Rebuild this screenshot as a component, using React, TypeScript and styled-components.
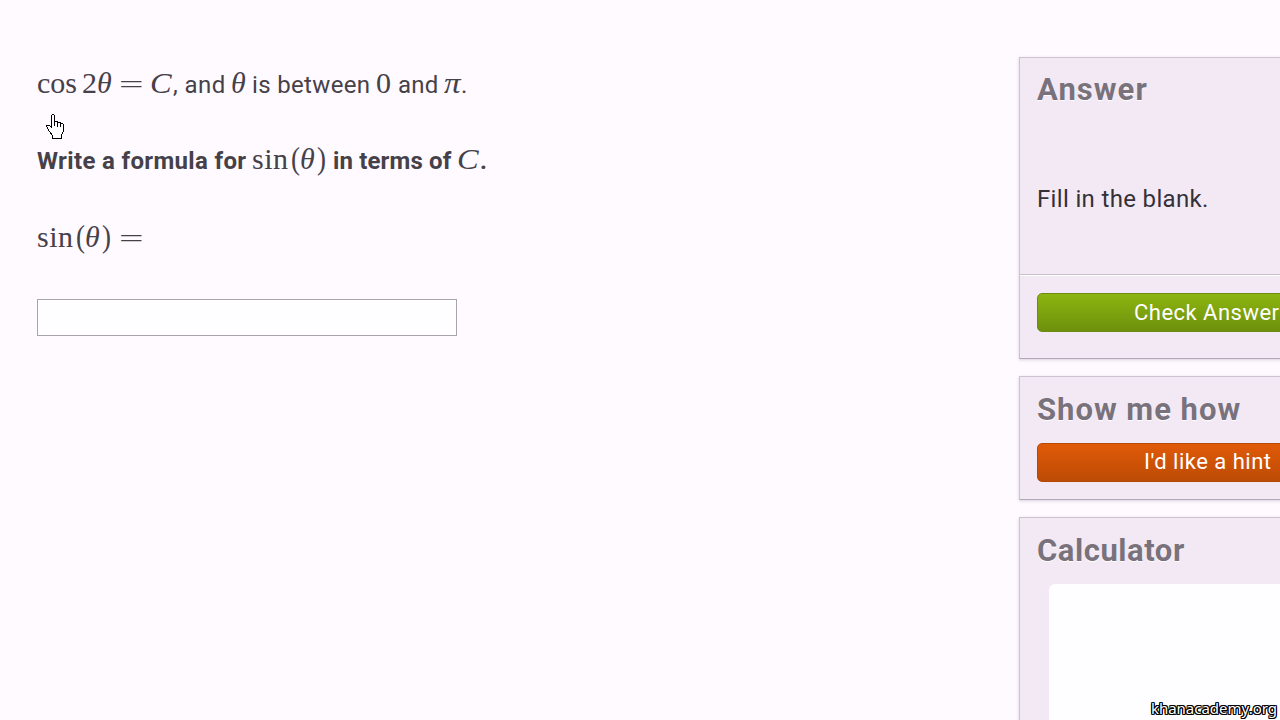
import React from "react";
import styled, { createGlobalStyle } from "styled-components";

const GlobalStyle = createGlobalStyle`
  * { box-sizing: border-box; }
  body { margin: 0; overflow: hidden; background: #fefaff; }
`;

const Page = styled.div`
  position: relative;
  display: flex;
  justify-content: space-between;
  width: 1280px;
  height: 720px;
  overflow: hidden;
  background: #fefaff;
  font-family: Roboto, "Liberation Sans", sans-serif;
  color: #464149;
`;

const Problem = styled.main`
  width: 640px;
  padding: 63px 0 0 37px;
`;

const Line = styled.div<{ $gap: number }>`
  display: flex;
  align-items: baseline;
  height: 40px;
  line-height: 40px;
  white-space: pre;
  margin-bottom: ${(p) => p.$gap}px;
`;

const Prose = styled.span<{ $w: number; $ls?: number; $bold?: boolean }>`
  flex: none;
  width: ${(p) => p.$w}px;
  font-size: 24px;
  font-weight: ${(p) => (p.$bold ? 700 : 400)};
  letter-spacing: ${(p) => p.$ls ?? 0}px;
`;

const MathText = styled.span<{ $w: number; $sx?: number; $sy?: number; $italic?: boolean }>`
  flex: none;
  width: ${(p) => p.$w}px;
  font-family: "Liberation Serif", serif;
  font-size: 30px;
  font-style: ${(p) => (p.$italic ? "italic" : "normal")};
  transform: scale(${(p) => p.$sx ?? 1}, ${(p) => p.$sy ?? 1});
  transform-origin: 0 73%;
`;

const FunctionName = styled(MathText)`
  letter-spacing: 0.5px;
`;

const AnswerInput = styled.input`
  display: block;
  width: 420px;
  height: 37px;
  padding: 0 8px;
  border: 1px solid #aaa3ad;
  border-radius: 0;
  background: #fefdff;
  font: 24px Roboto, sans-serif;
  outline: none;
`;

const Sidebar = styled.aside`
  flex: none;
  display: flex;
  flex-direction: column;
  gap: 17px;
  width: 261px;
  padding-top: 57px;
`;

const Card = styled.section<{ $h: number }>`
  flex: none;
  width: 420px;
  height: ${(p) => p.$h}px;
  border: 1px solid #cdc2d1;
  border-bottom-color: #b3a8b8;
  background: #f3e9f5;
  box-shadow: 0 1px 3px rgba(90, 70, 100, 0.22);
`;

const Heading = styled.h2<{ $ls: number; $top?: number }>`
  margin: 0;
  height: 51px;
  padding: ${(p) => p.$top ?? 14}px 0 0 17px;
  font-size: 31px;
  line-height: 38px;
  font-weight: 700;
  letter-spacing: ${(p) => p.$ls}px;
  color: #79727c;
  text-shadow: 0 1px 0 #fff;
`;

const Instruction = styled.p`
  margin: 0;
  height: 165px;
  padding: 75px 0 0 17px;
  font-size: 24px;
  line-height: 30px;
  letter-spacing: 0.34px;
  color: #353038;
`;

const Actions = styled.div`
  padding: 18px 0 0 17px;
  border-top: 1px solid #c9bfcd;
  box-shadow: inset 0 1px 0 #fff;
`;

const HintActions = styled.div`
  padding: 15px 0 0 17px;
`;

const Button = styled.button<{ $tone: "green" | "orange"; $pad: number; $ls: number }>`
  display: block;
  width: 384px;
  height: 39px;
  padding: 0 0 ${(p) => (p.$tone === "green" ? 0 : 1)}px ${(p) => p.$pad}px;
  border: 1px solid ${(p) => (p.$tone === "green" ? "#6d8c12" : "#b44a08")};
  border-radius: 5px;
  background: ${(p) =>
    p.$tone === "green"
      ? "linear-gradient(#8db510, #6e900d)"
      : "linear-gradient(#e05a08, #bd4b05)"};
  color: #fff;
  font: 22px/${(p) => (p.$tone === "green" ? 37 : 36)}px Roboto, sans-serif;
  letter-spacing: ${(p) => p.$ls}px;
  text-align: left;
  white-space: nowrap;
`;

const CalculatorScreen = styled.div`
  width: 360px;
  height: 200px;
  margin: 15px 0 0 29px;
  border-radius: 6px;
  background: #fefdff;
`;

const Pointer = styled.svg`
  position: absolute;
  left: 46px;
  top: 114px;
`;

const Watermark = styled.div`
  position: absolute;
  right: 3px;
  bottom: 3px;
  font: 15px/18px "Noto Sans", "Open Sans", sans-serif;
  color: #fff;
  text-shadow: -1px -1px 0 #000, 0 -1px 0 #000, 1px -1px 0 #000, -1px 0 0 #000,
    1px 0 0 #000, -1px 1px 0 #000, 0 1px 0 #000, 1px 1px 0 #000;
`;

export default function App() {
  return (
    <Page>
      <GlobalStyle />
      <Problem>
        <Line $gap={36}>
          <MathText $w={45}>cos</MathText>
          <MathText $w={15}>2</MathText>
          <MathText $w={22} $italic>θ</MathText>
          <MathText $w={31} $sx={1.45} $sy={0.85}>=</MathText>
          <MathText $w={23} $sx={1.08} $italic>C</MathText>
          <Prose $w={58} $ls={0.45}>, and</Prose>
          <MathText $w={21} $italic>θ</MathText>
          <Prose $w={124} $ls={0.34}>is between</Prose>
          <MathText $w={22}>0</MathText>
          <Prose $w={46} $ls={0.2}>and</Prose>
          <MathText $w={17} $sx={1.1} $sy={0.95} $italic>π</MathText>
          <Prose $w={10}>.</Prose>
        </Line>
        <Line $gap={38}>
          <Prose $w={215} $ls={0.34} $bold>Write a formula for</Prose>
          <FunctionName $w={39}>sin</FunctionName>
          <MathText $w={9} $sx={0.9} $sy={1.05}>(</MathText>
          <MathText $w={17} $italic>θ</MathText>
          <MathText $w={16} $sx={0.9} $sy={1.05}>)</MathText>
          <Prose $w={124} $ls={0.15} $bold>in terms of</Prose>
          <MathText $w={23} $sx={1.08} $italic>C</MathText>
          <Prose $w={10} $bold>.</Prose>
        </Line>
        <Line $gap={42}>
          <FunctionName $w={39}>sin</FunctionName>
          <MathText $w={9} $sx={0.9} $sy={1.05}>(</MathText>
          <MathText $w={17} $italic>θ</MathText>
          <MathText $w={17} $sx={0.9} $sy={1.05}>)</MathText>
          <MathText $w={30} $sx={1.45} $sy={0.85}>=</MathText>
        </Line>
        <AnswerInput aria-label="Formula" />
      </Problem>

      <Sidebar>
        <Card $h={302}>
          <Heading $ls={1.05} $top={13}>Answer</Heading>
          <Instruction>Fill in the blank.</Instruction>
          <Actions>
            <Button $tone="green" $pad={96} $ls={0.48}>Check Answer</Button>
          </Actions>
        </Card>
        <Card $h={124}>
          <Heading $ls={0.98}>Show me how</Heading>
          <HintActions>
            <Button $tone="orange" $pad={106} $ls={0.5}>I'd like a hint</Button>
          </HintActions>
        </Card>
        <Card $h={260}>
          <Heading $ls={0.55}>Calculator</Heading>
          <CalculatorScreen />
        </Card>
      </Sidebar>

      <Pointer width="19" height="26" viewBox="0 0 19 26" shapeRendering="crispEdges">
        <path
          d="M5.5 1.5L6.5 .5H7.5L8.5 1.5V7.5H11.5L12.5 8.5H14.5L15.5 9.5H16.5L17.5 10.5V17.5L15.5 20.5V24.5H6.5V21.5L3.5 17.5L.5 12.5V11.5H3.5L5.5 13.5Z"
          fill="#fff"
          stroke="#000"
        />
        <path d="M8.5 7V12M11.5 8V13M14.5 9V13" fill="none" stroke="#000" />
      </Pointer>
      <Watermark>khanacademy.org</Watermark>
    </Page>
  );
}
